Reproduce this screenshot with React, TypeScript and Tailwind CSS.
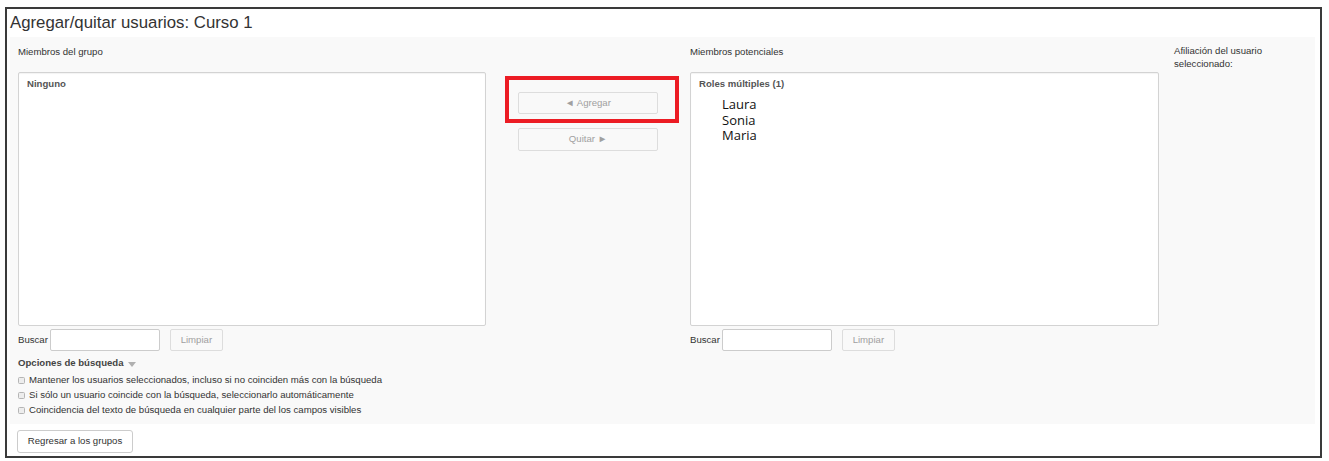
const base = "font-['Liberation_Sans',Arial,sans-serif]";

function ListBox({ children }: { children: React.ReactNode }) {
  return (
    <div className="h-[254px] bg-white border border-[#d3d3d3] rounded-[2px] shadow-[inset_0_1px_1px_rgba(0,0,0,0.05)] pt-[5px] px-[8px]">
      {children}
    </div>
  );
}

function SearchRow() {
  return (
    <div className="mt-[3px] h-[22px] flex items-center text-[9.6px] text-[#333]">
      <span>Buscar</span>
      <div className="ml-[2px] w-[110px] h-[22px] bg-white border border-[#ccc] rounded-[2px]" />
      <div className="ml-[10px] w-[53px] h-[22px] border border-[#ddd] rounded-[2px] bg-[#f9f9f9] flex items-center justify-center text-[#a0a0a0]">
        Limpiar
      </div>
    </div>
  );
}

function Check({ label }: { label: string }) {
  return (
    <div className="h-[15px] flex items-center">
      <span className="w-[7px] h-[7px] border border-[#b5b5b5] rounded-[1.5px] bg-[#ededed]" />
      <span className="ml-[4px]">{label}</span>
    </div>
  );
}

export default function App() {
  return (
    <div className={`w-[1329px] h-[461px] bg-white pt-[7px] pl-[5px] ${base}`}>
      <div className="w-[1317px] h-[451px] border-2 border-[#3a3a3a] pl-[3px]">
        <h2 className="h-[28px] leading-[28px] text-[16.8px] text-[#333]">Agregar/quitar usuarios: Curso 1</h2>

        <div className="w-[1305px] h-[387px] bg-[#f9f9f9] pt-[8px] pl-[8px] flex text-[9.6px] text-[#333]">
          {/* miembros del grupo */}
          <div className="w-[468px]">
            <div className="h-[27px] leading-[13px]">Miembros del grupo</div>
            <ListBox>
              <div className="font-bold text-[#555] leading-[12px]">Ninguno</div>
            </ListBox>
            <SearchRow />
            <div className="mt-[5px] h-[15px] flex items-center font-bold text-[#444]">
              Opciones de búsqueda
              <svg className="ml-[4px] mt-[2px]" width="8" height="5" viewBox="0 0 8 5">
                <path d="M0 0h8L4 5z" fill="#b0b0b0" />
              </svg>
            </div>
            <div className="mt-[2px]">
              <Check label="Mantener los usuarios seleccionados, incluso si no coinciden más con la búsqueda" />
              <Check label="Si sólo un usuario coincide con la búsqueda, seleccionarlo automáticamente" />
              <Check label="Coincidencia del texto de búsqueda en cualquier parte del los campos visibles" />
            </div>
          </div>

          {/* botones */}
          <div className="w-[204px] relative pt-[47px] pl-[32px]">
            <div className="w-[140px] h-[22px] border border-[#ddd] rounded-[2px] bg-[#f9f9f9] flex items-center justify-center text-[#a0a0a0]">
              ◄ Agregar
            </div>
            <div className="mt-[14px] w-[140px] h-[23px] border border-[#ddd] rounded-[2px] bg-[#f9f9f9] flex items-center justify-center text-[#a0a0a0]">
              Quitar ►
            </div>
            <div className="absolute left-[19px] top-[31px] w-[174px] h-[47px] border-[4px] border-[#ec1c24]" />
          </div>

          {/* miembros potenciales */}
          <div className="w-[469px]">
            <div className="h-[27px] leading-[13px]">Miembros potenciales</div>
            <ListBox>
              <div className="font-bold text-[#555] leading-[12px]">Roles múltiples (1)</div>
              <div className="mt-[7px] pl-[23px] font-['Open_Sans',sans-serif] text-[13px] leading-[15.5px] text-[#111]">
                <div>Laura</div>
                <div>Sonia</div>
                <div>Maria</div>
              </div>
            </ListBox>
            <SearchRow />
          </div>

          {/* afiliación */}
          <div className="ml-[15px] w-[130px] leading-[12.5px]">
            Afiliación del usuario
            <br />
            seleccionado:
          </div>
        </div>

        <div className="mt-[6px] ml-[7px] w-[116px] h-[23px] border border-[#ccc] rounded-[3px] bg-white flex items-center justify-center text-[9.6px] text-[#333]">
          Regresar a los grupos
        </div>
      </div>
    </div>
  );
}
